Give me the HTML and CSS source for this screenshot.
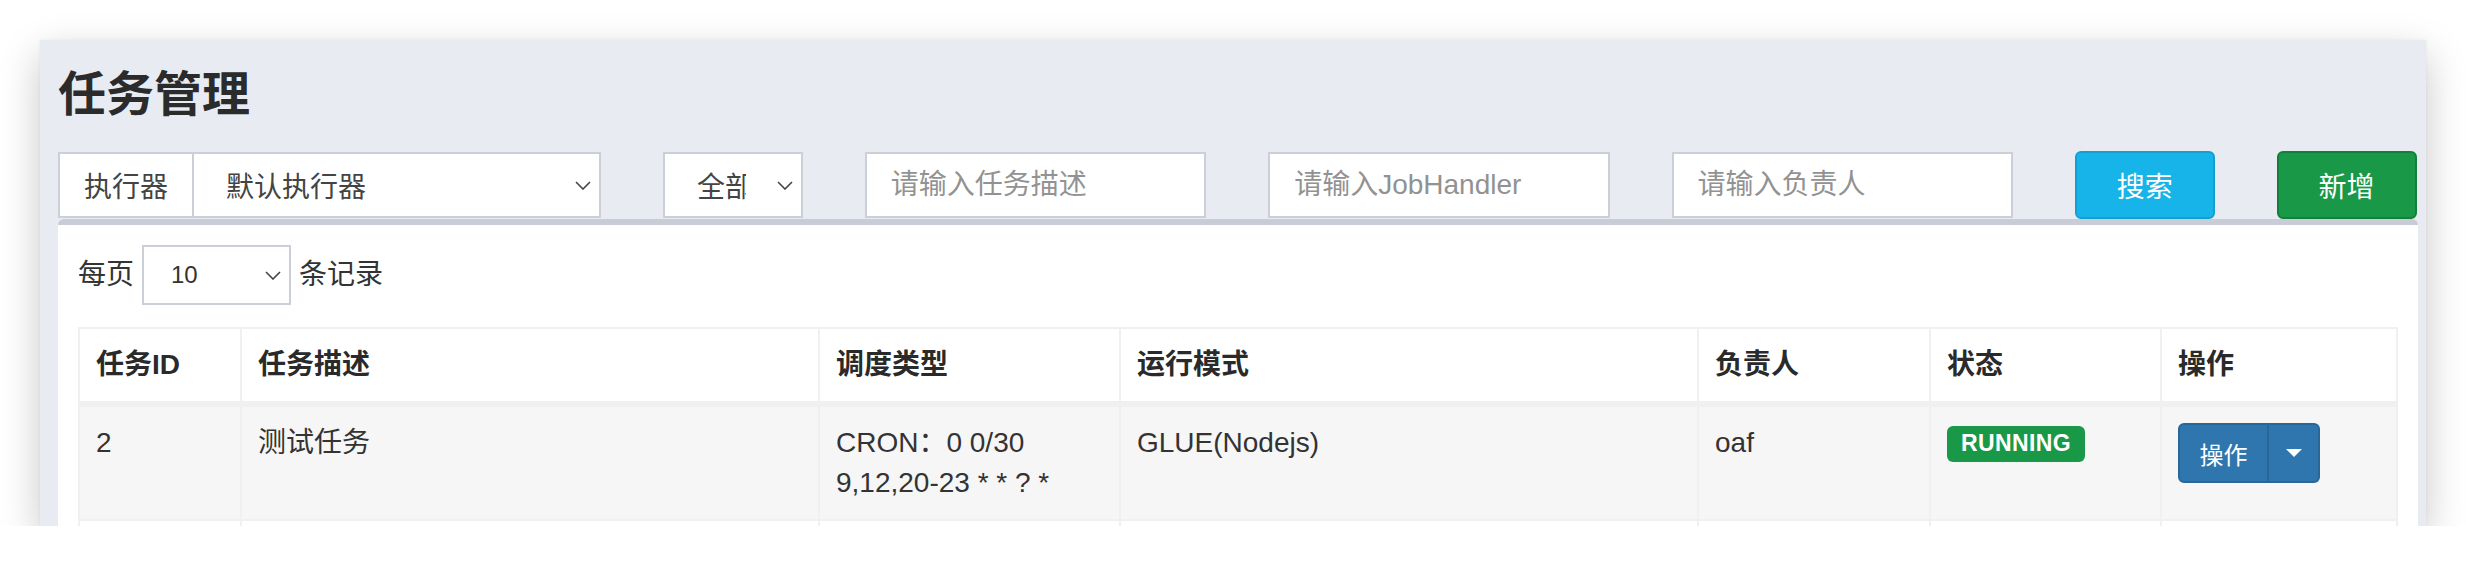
FILE: index.html
```html
<!DOCTYPE html>
<html lang="zh-CN">
<head>
<meta charset="utf-8">
<title>任务管理</title>
<link rel="stylesheet" href="styles.css">
</head>
<body>
<div class="window">
  <h1 class="page-title">任务管理</h1>
  <div class="filters">
    <div class="input-group span-3">
      <span class="addon">执行器</span>
      <div class="select select-main">
        <span class="select-text">默认执行器</span>
        <svg class="chevron" width="16" height="9" viewBox="0 0 16 9"><polyline points="1,1 8,8 15,1" fill="none" stroke="#444" stroke-width="1.6"/></svg>
      </div>
    </div>
    <div class="select select-status">
      <span class="select-text clip">全部</span>
      <svg class="chevron" width="16" height="9" viewBox="0 0 16 9"><polyline points="1,1 8,8 15,1" fill="none" stroke="#444" stroke-width="1.6"/></svg>
    </div>
    <input class="text-input span-2" type="text" placeholder="请输入任务描述">
    <input class="text-input span-2" type="text" placeholder="请输入JobHandler">
    <input class="text-input span-2" type="text" placeholder="请输入负责人">
    <button class="btn btn-info" type="button">搜索</button>
    <button class="btn btn-success" type="button">新增</button>
  </div>
  <div class="box">
    <div class="length">
      <span>每页</span>
      <div class="select select-sm">
        <span class="select-text">10</span>
        <svg class="chevron" width="16" height="9" viewBox="0 0 16 9"><polyline points="1,1 8,8 15,1" fill="none" stroke="#444" stroke-width="1.6"/></svg>
      </div>
      <span>条记录</span>
    </div>
    <table class="job-table">
      <thead>
        <tr>
          <th class="c-id">任务ID</th>
          <th class="c-desc">任务描述</th>
          <th class="c-cron">调度类型</th>
          <th class="c-mode">运行模式</th>
          <th class="c-owner">负责人</th>
          <th class="c-status">状态</th>
          <th class="c-op">操作</th>
        </tr>
      </thead>
      <tbody>
        <tr>
          <td>2</td>
          <td>测试任务</td>
          <td>CRON：0 0/30 9,12,20-23 * * ? *</td>
          <td>GLUE(Nodejs)</td>
          <td>oaf</td>
          <td><span class="label-running">RUNNING</span></td>
          <td>
            <div class="btn-group">
              <button class="btn-op" type="button">操作</button>
              <button class="btn-caret" type="button"><span class="caret"></span></button>
            </div>
          </td>
        </tr>
        <tr>
          <td>&nbsp;</td><td>&nbsp;</td><td>&nbsp;</td><td>&nbsp;</td><td>&nbsp;</td><td>&nbsp;</td><td>&nbsp;</td>
        </tr>
      </tbody>
    </table>
  </div>
</div>
</body>
</html>
```
FILE: styles.css
```css
html, body {
  margin: 0;
  background: #ffffff;
}
body {
  font-family: "Liberation Sans", "Noto Sans CJK SC", sans-serif;
  color: #333;
}
.window {
  margin: 40px 0 0 40px;
  width: 2386px;
  height: 486px;
  box-sizing: border-box;
  padding: 28px 0 0 18px;
  background: #e8ebf2;
  overflow: hidden;
  box-shadow: 0 14px 38px rgba(0, 0, 0, 0.22), 0 0 3px rgba(0, 0, 0, 0.06);
}
.page-title {
  margin: 0 0 30px;
  font-size: 48px;
  line-height: 53px;
  font-weight: 700;
  color: #2b2b2b;
}
.filters {
  display: grid;
  grid-template-columns: repeat(12, 140px);
  column-gap: 61.7px;
  height: 68px;
  align-items: center;
}
.span-3 { grid-column: span 3; }
.span-2 { grid-column: span 2; }

.input-group {
  display: flex;
  height: 66px;
}
.addon {
  width: 136px;
  box-sizing: border-box;
  border: 2px solid #cbcfd8;
  background: #fff;
  display: flex;
  align-items: center;
  justify-content: center;
  font-size: 28px;
  color: #444;
}
.select {
  display: flex;
  align-items: center;
  box-sizing: border-box;
  background: #fff;
  border: 2px solid #cbcfd8;
  color: #444;
  font-size: 28px;
}
.select-main {
  flex: 1;
  border-left: 0;
  padding-left: 32px;
}
.select-status {
  height: 66px;
  padding-left: 32px;
}
.select-text {
  white-space: nowrap;
}
.clip {
  width: 49px;
  overflow: hidden;
}
.chevron {
  margin-left: auto;
  margin-right: 8px;
  flex: none;
}
.text-input {
  height: 66px;
  box-sizing: border-box;
  border: 2px solid #cbcfd8;
  border-radius: 0;
  background: #fff;
  padding: 0 24px;
  font-family: inherit;
  font-size: 28px;
  color: #444;
  outline: none;
}
.text-input::placeholder {
  color: #929292;
}
.btn {
  height: 68px;
  box-sizing: border-box;
  border-radius: 6px;
  font-family: inherit;
  font-size: 28px;
  color: #fff;
  padding: 0;
}
.btn-info {
  background: #17b4e9;
  border: 2px solid #12a0d3;
}
.btn-success {
  background: #199948;
  border: 2px solid #127f3a;
}

.box {
  margin-right: 8px;
  background: #fff;
  border-top: 6px solid #c8ccd6;
  border-radius: 6px 6px 0 0;
  padding: 20px 20px 0;
  height: 400px;
  box-sizing: border-box;
}
.length {
  display: flex;
  align-items: center;
  gap: 8px;
  font-size: 28px;
  line-height: 40px;
  height: 60px;
  color: #333;
}
.select-sm {
  width: 149px;
  height: 60px;
  padding-left: 27px;
  font-size: 24px;
  color: #333;
}
.select-sm .chevron {
  margin-right: 8px;
}

.job-table {
  margin-top: 22px;
  width: 100%;
  table-layout: fixed;
  border-collapse: separate;
  border-spacing: 0;
  border-top: 2px solid #f0f0f0;
  border-left: 2px solid #f0f0f0;
}
.job-table th,
.job-table td {
  box-sizing: border-box;
  padding: 16px;
  font-size: 28px;
  line-height: 40px;
  text-align: left;
  vertical-align: top;
  border-right: 2px solid #f0f0f0;
  border-bottom: 2px solid #f0f0f0;
  color: #333;
}
.job-table th {
  font-weight: 700;
  color: #2a2a2a;
  border-bottom-width: 6px;
  background: #fff;
}
.job-table tbody tr:nth-child(odd) td {
  background: #f6f6f6;
}
.c-id { width: 162px; }
.c-desc { width: 578px; }
.c-cron { width: 301px; }
.c-mode { width: 578px; }
.c-owner { width: 232px; }
.c-status { width: 231px; }
.c-op { width: 236px; }

.label-running {
  display: inline-block;
  vertical-align: top;
  margin-top: 3px;
  background: #199948;
  color: #fff;
  font-weight: 700;
  font-size: 23px;
  line-height: 27px;
  padding: 4px 14px 5px;
  border-radius: 6px;
  letter-spacing: 0.4px;
}
.btn-group {
  display: inline-flex;
  vertical-align: top;
}
.btn-op,
.btn-caret {
  height: 60px;
  box-sizing: border-box;
  background: #2e76ad;
  border: 2px solid #28679a;
  color: #fff;
  font-family: inherit;
  font-size: 24px;
  margin: 0;
}
.btn-op {
  width: 91px;
  padding: 0;
  border-radius: 6px 0 0 6px;
}
.btn-caret {
  width: 51px;
  border-left: 0;
  border-radius: 0 6px 6px 0;
  display: flex;
  align-items: center;
  justify-content: center;
  padding: 0;
}
.caret {
  width: 0;
  height: 0;
  border-top: 8px solid #fff;
  border-left: 8px solid transparent;
  border-right: 8px solid transparent;
}
```
